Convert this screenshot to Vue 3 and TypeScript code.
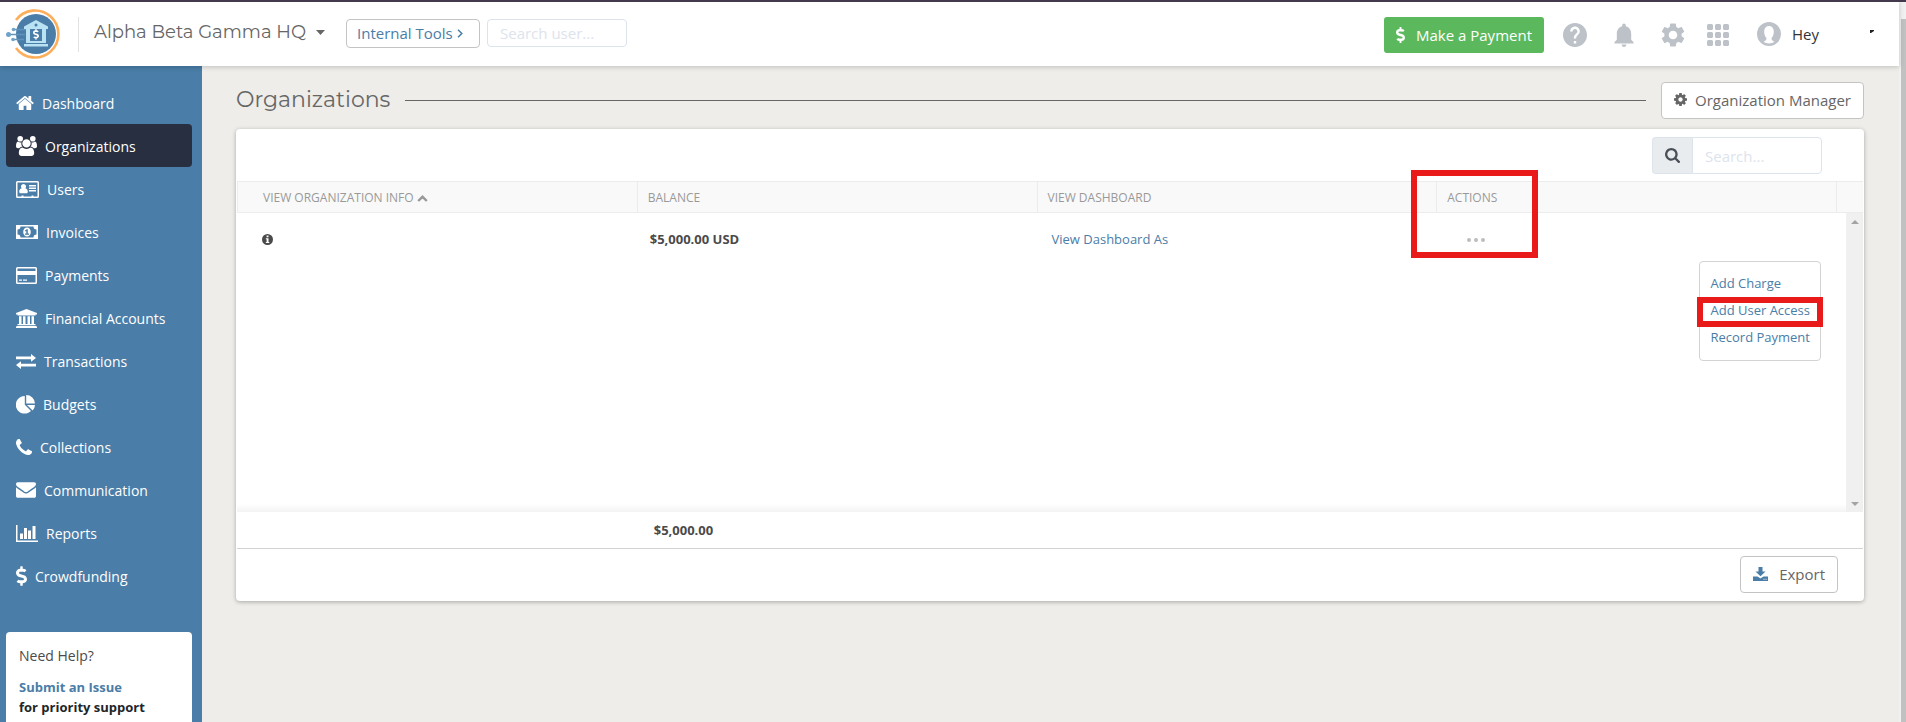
<script setup lang="ts">
import { ref } from 'vue'

interface Icon {
  box: string
  w: number
  h: number
  d: string
}
interface NavItem {
  label: string
  icon: Icon
  active?: boolean
}

const dollarPath =
  'M209.2 233.4l-108-31.6C88.7 198.2 80 186.5 80 173.5c0-16.3 13.2-29.5 29.5-29.5h66.3c12.2 0 24.2 3.7 34.2 10.5 6.1 4.1 14.3 3.1 19.5-2l34.8-34c7.1-6.9 6.1-18.4-1.8-24.5C238 74.8 207.4 64.1 176 64V16c0-8.8-7.2-16-16-16h-32c-8.8 0-16 7.2-16 16v48h-2.5C45.8 64-5.4 118.7.5 183.6c4.2 46.1 39.4 83.6 83.8 96.6l102.5 30c12.5 3.7 21.2 15.3 21.2 28.3 0 16.3-13.2 29.5-29.5 29.5h-66.3C100 368 88 364.3 78 357.5c-6.1-4.1-14.3-3.1-19.5 2l-34.8 34c-7.1 6.9-6.1 18.4 1.8 24.5 24.5 19.2 55.1 29.9 86.5 30v48c0 8.8 7.2 16 16 16h32c8.8 0 16-7.2 16-16v-48.2c46.6-.9 90.3-28.6 105.7-72.7 21.5-61.6-14.6-124.8-72.5-141.7z'

const navItems: NavItem[] = [
  {
    label: 'Dashboard',
    icon: {
      box: '64 253 1664 1283', w: 18, h: 14,
      d: 'M1472 992v480q0 26-19 45t-45 19h-384v-384h-256v384h-384q-26 0-45-19t-19-45v-480q0-1 .5-3t.5-3l575-474 575 474q1 2 1 6zm223-69l-62 74q-8 9-21 11h-3q-13 0-21-7l-692-577-692 577q-12 8-24 7-13-2-21-11l-62-74q-8-10-7-23.5t11-21.5l719-599q32-26 76-26t76 26l244 204v-195q0-14 9-23t23-9h192q14 0 23 9t9 23v408l219 182q10 8 11 21.5t-7 23.5z',
    },
  },
  {
    label: 'Organizations',
    active: true,
    icon: {
      box: '0 0 21 20', w: 21, h: 20,
      d: 'M10.500 3.200a4.200 4.200 0 1 1 0 8.400a4.200 4.200 0 1 1 0-8.400zM4.200 0a2.800 2.800 0 1 1 0 5.600a2.800 2.800 0 1 1 0-5.600zM16.800 0a2.800 2.800 0 1 1 0 5.600a2.800 2.800 0 1 1 0-5.600zM5.500 6.200C5 8.200 5.600 9.800 6.600 10.800C5 10.800 4 11.400 3.400 12.200H2C.8 12.200 0 11.400 0 10.200C0 7.600.6 5.800 2 5.500C3.200 6.400 4.500 6.600 5.500 6.200zM15.500 6.200C16 8.200 15.400 9.800 14.400 10.800C16 10.800 17 11.400 17.600 12.200H19C20.200 12.200 21 11.400 21 10.200C21 7.600 20.400 5.800 19 5.500C17.800 6.400 16.500 6.600 15.500 6.200zM6.400 11.500C8.800 13.400 12.200 13.400 14.600 11.500C17 11.600 18.200 14 18.200 17C18.200 19 17 20 15.300 20H5.700C4 20 2.800 19 2.800 17C2.800 14 4 11.600 6.400 11.500z',
    },
  },
  {
    label: 'Users',
    icon: {
      box: '0 0 23 17', w: 23, h: 17,
      d: 'M1.500 0h20a1.500 1.500 0 0 1 1.500 1.500v14a1.500 1.500 0 0 1-1.500 1.500h-20a1.500 1.500 0 0 1-1.500-1.500v-14a1.500 1.500 0 0 1 1.500-1.500zM1.500 1.500v14h4v-1h2v1h8v-1h2v1h4v-14zM7.500 3a2.500 2.500 0 0 1 1.800 4.300c1.700.2 2.500 1.700 2.500 3.500c0 .8-.5 1.500-1.300 1.500h-6c-.8 0-1.300-.7-1.300-1.500c0-1.800.8-3.300 2.500-3.500a2.500 2.500 0 0 1 1.800-4.300zM13 4h7v1.500h-7zM13 6.500h7v1.500h-7zM13 9h7v1.500h-7z',
    },
  },
  {
    label: 'Invoices',
    icon: {
      box: '0 0 22 14', w: 22, h: 14,
      d: 'M0 0h22v14H0zM4.500 1.500a3 3 0 0 1-3 3v5a3 3 0 0 1 3 3h13a3 3 0 0 1 3-3v-5a3 3 0 0 1-3-3zM11 2.500c2.200 0 3.800 2 3.800 4.500s-1.600 4.500-3.800 4.500s-3.800-2-3.800-4.500s1.600-4.500 3.800-4.500zM10.600 4.200L8.800 5.700l.7.900l.8-.5v2.500H9v1.200h4V8.600h-1.200V4.200z',
    },
  },
  {
    label: 'Payments',
    icon: {
      box: '0 0 21 17', w: 21, h: 17,
      d: 'M1.500 0h18a1.500 1.500 0 0 1 1.500 1.500v14a1.500 1.500 0 0 1-1.500 1.500h-18a1.500 1.500 0 0 1-1.500-1.500v-14a1.500 1.500 0 0 1 1.500-1.500zM1.500 1.500v2.500h18v-2.500zM1.500 8v7.500h18v-7.500zM3 12.500h3v1.200h-3zM7 12.500h4v1.200h-4z',
    },
  },
  {
    label: 'Financial Accounts',
    icon: {
      box: '0 0 21 19', w: 21, h: 19,
      d: 'M10.500 0L21 4v1.500h-1.500v1h-18v-1H0V4zM3 7.300h2.500v7.700h1.500v-7.700h2.500v7.700h2v-7.700h2.500v7.700h1.500v-7.700h2.500v7.700h1.500v1.300h-18V15H3zM1 17h19l1 .8V19H0v-1.200z',
    },
  },
  {
    label: 'Transactions',
    icon: {
      box: '0 0 20 15', w: 20, h: 15,
      d: 'M0 2.500h15V0l5 3.900l-5 3.900V5.300H0zM20 9.800H5V7.200L0 11.100L5 15v-2.500h15z',
    },
  },
  {
    label: 'Budgets',
    icon: {
      box: '0 0 19 19', w: 19, h: 19,
      d: 'M8.800 1v8.700l6.200 6.200A8.800 8.800 0 1 1 8.800 1zM10.200 0A8.800 8.800 0 0 1 19 8.500h-8.800zM11 10h8a8.800 8.800 0 0 1-2.400 5.600z',
    },
  },
  {
    label: 'Collections',
    icon: {
      box: '192 128 1408 1408', w: 16, h: 16,
      d: 'M1600 1240q0 27-10 70.5t-21 68.5q-21 50-122 106-94 51-186 51-27 0-53-3.5t-57.5-12.5-47-14.500-55.500-20.500-49-18q-98-35-175-83-127-79-264-216t-216-264q-48-77-83-175-3-9-18-49t-20.500-55.500-14.500-47-12.500-57.500-3.500-53q0-92 51-186 56-101 106-122 25-11 68.500-21t70.500-10q14 0 21 3 18 6 53 76 11 19 30 54t35 63.500 31 53.500q3 4 17.500 25t21.500 35.500 7 28.500q0 20-28.500 50t-62 55-62 53-28.500 46q0 9 5 22.500t8.500 20.500 14 24 11.500 19q76 137 174 235t235 174q2 1 19 11.500t24 14 20.500 8.500 22.500 5q18 0 46-28.500t53-62 55-62 50-28.500q14 0 28.500 7t35.500 21.500 25 17.500q25 15 53.500 31t63.500 35 54 30q70 35 76 53 3 7 3 21z',
    },
  },
  {
    label: 'Communication',
    icon: {
      box: '0 256 1792 1408', w: 20, h: 16,
      d: 'M1792 710v794q0 66-47 113t-113 47h-1472q-66 0-113-47t-47-113v-794q44 49 101 87 362 246 497 345 57 42 92.500 65.500t94.500 48 110 24.500h2q51 0 110-24.500t94.500-48 92.500-65.500q170-123 498-345 57-39 100-87zm0-294q0 79-49 151t-122 123q-376 261-468 325-10 7-42.500 31t-54 38.500-52 32.500-57.500 27-50 9h-2q-23 0-50-9t-57.500-27-52-32.500-54-38.500-42.500-31q-91-64-262-182.500t-205-142.500q-62-42-117-115.500t-55-136.500q0-78 41.500-130t118.500-52h1472q65 0 112.500 47t47.500 113z',
    },
  },
  {
    label: 'Reports',
    icon: {
      box: '0 0 22 17', w: 22, h: 17,
      d: 'M0 0h1.500v15.500H22V17H0zM4 8.500h3V14H4zM8 3h3v11H8zM12 5.500h3V14h-3zM16.500 1h3v13h-3z',
    },
  },
  { label: 'Crowdfunding', icon: { box: '0 0 288 512', w: 11, h: 20, d: dollarPath } },
]

const tools: { label: string; cls: string; box: string; d: string }[] = [
  {
    label: 'Help', cls: 'help', box: '2 2 20 20',
    d: 'M12 2C6.480 2 2 6.480 2 12s4.480 10 10 10 10-4.480 10-10S17.520 2 12 2zm1 17h-2v-2h2v2zm2.070-7.750l-.9.920C13.450 12.900 13 13.500 13 15h-2v-.5c0-1.100.45-2.100 1.170-2.830l1.240-1.260c.37-.36.59-.86.59-1.410 0-1.100-.9-2-2-2s-2 .9-2 2H8c0-2.210 1.790-4 4-4s4 1.790 4 4c0 .88-.36 1.680-.93 2.250z',
  },
  {
    label: 'Notifications', cls: 'bell', box: '2 2 20 20',
    d: 'M12 22c1.100 0 2-.9 2-2h-4c0 1.100.89 2 2 2zm6-6v-5c0-3.070-1.640-5.640-4.500-6.320V4c0-.83-.67-1.500-1.500-1.500s-1.500.67-1.500 1.500v.68C7.630 5.360 6 7.920 6 11v5l-2 2v1h16v-1l-2-2z',
  },
  {
    label: 'Settings', cls: 'gear', box: '2 2 20 20',
    d: 'M19.140 12.940c.04-.3.06-.61.06-.94 0-.32-.02-.64-.07-.94l2.030-1.580c.18-.14.23-.41.12-.61l-1.920-3.320c-.12-.22-.37-.29-.59-.22l-2.390.96c-.5-.38-1.030-.7-1.620-.94l-.36-2.540c-.04-.24-.24-.41-.48-.41h-3.840c-.24 0-.43.17-.47.41l-.36 2.540c-.59.24-1.130.57-1.620.94l-2.390-.96c-.22-.08-.47 0-.59.22L2.740 8.870c-.12.21-.08.47.12.61l2.030 1.580c-.05.3-.09.63-.09.94s.02.64.07.94l-2.030 1.580c-.18.14-.23.41-.12.61l1.920 3.320c.12.22.37.29.59.22l2.390-.96c.5.38 1.030.7 1.620.94l.36 2.540c.05.24.24.41.48.41h3.840c.24 0 .44-.17.47-.41l.36-2.540c.59-.24 1.130-.56 1.620-.94l2.390.96c.22.08.47 0 .59-.22l1.920-3.320c.12-.22.07-.47-.12-.61l-2.010-1.580zM12 15.600c-1.980 0-3.600-1.620-3.600-3.600s1.620-3.600 3.600-3.600 3.600 1.620 3.600 3.600-1.620 3.600-3.600 3.600z',
  },
  {
    label: 'Apps', cls: 'grid', box: '1 1 22 22',
    d: 'M2.500 1h3a1.500 1.500 0 0 1 1.500 1.500v3a1.500 1.500 0 0 1-1.500 1.500h-3a1.500 1.500 0 0 1-1.500-1.500v-3a1.500 1.500 0 0 1 1.500-1.500zm8 0h3a1.500 1.500 0 0 1 1.500 1.500v3a1.500 1.500 0 0 1-1.500 1.500h-3a1.500 1.500 0 0 1-1.500-1.500v-3a1.500 1.500 0 0 1 1.500-1.500zm8 0h3a1.500 1.500 0 0 1 1.500 1.500v3a1.500 1.500 0 0 1-1.500 1.500h-3a1.500 1.500 0 0 1-1.500-1.500v-3a1.500 1.500 0 0 1 1.500-1.500zm-16 8h3a1.500 1.500 0 0 1 1.500 1.500v3a1.500 1.500 0 0 1-1.500 1.500h-3a1.500 1.500 0 0 1-1.500-1.500v-3a1.500 1.500 0 0 1 1.500-1.500zm8 0h3a1.500 1.500 0 0 1 1.500 1.500v3a1.500 1.500 0 0 1-1.500 1.500h-3a1.500 1.500 0 0 1-1.500-1.500v-3a1.500 1.500 0 0 1 1.500-1.500zm8 0h3a1.500 1.500 0 0 1 1.500 1.500v3a1.500 1.500 0 0 1-1.500 1.500h-3a1.500 1.500 0 0 1-1.500-1.500v-3a1.500 1.500 0 0 1 1.500-1.500zm-16 8h3a1.500 1.500 0 0 1 1.500 1.500v3a1.500 1.500 0 0 1-1.500 1.500h-3a1.500 1.500 0 0 1-1.500-1.500v-3a1.500 1.500 0 0 1 1.500-1.500zm8 0h3a1.500 1.500 0 0 1 1.500 1.500v3a1.500 1.500 0 0 1-1.500 1.500h-3a1.500 1.500 0 0 1-1.500-1.500v-3a1.500 1.500 0 0 1 1.500-1.500zm8 0h3a1.500 1.500 0 0 1 1.500 1.500v3a1.500 1.500 0 0 1-1.500 1.500h-3a1.500 1.500 0 0 1-1.500-1.500v-3a1.500 1.500 0 0 1 1.500-1.500z',
  },
]

const menuOpen = ref(true)
const userQuery = ref('')
const query = ref('')
</script>

<template>
  <div class="page">
    <div class="shell">
      <header class="topbar">
        <a class="logo" href="#" aria-label="Home">
          <svg width="55" height="50" viewBox="0 0 55 50">
            <path d="M10 11A23.500 23.500 0 1 1 10 39" fill="none" stroke="#fdae5b" stroke-width="2.600" />
            <circle cx="30" cy="25" r="20" fill="#4a7da7" />
            <g stroke="#5f93bb" stroke-width="1.500" fill="#4a7da7">
              <path d="M7 20.500H20M2 25.500H19M6 30.500H18" />
            </g>
            <g fill="#6fa3c8">
              <circle cx="2.500" cy="25.500" r="2.500" />
              <circle cx="7.500" cy="20.500" r="1.800" />
              <circle cx="7" cy="30.500" r="1.800" />
            </g>
            <g fill="#b9e2f2">
              <path d="M30 11L42 17.500V20H18V17.500z" />
              <path d="M20 20h4v12h-4zM36 20h4v12h-4zM20 32h20v2H20zM18 35h24v2.500H18z" />
            </g>
            <circle cx="30" cy="16" r="1.500" fill="#4a7da7" />
            <g transform="translate(27 20) scale(.0208)" fill="#fff"><path :d="dollarPath" /></g>
          </svg>
        </a>
        <button class="org-switch" type="button">
          Alpha Beta Gamma HQ
          <svg width="9" height="5" viewBox="0 0 9 5"><path d="M0 0h9L4.500 5z" fill="currentColor" /></svg>
        </button>
        <button class="internal" type="button">
          Internal Tools
          <svg width="6" height="9" viewBox="0 0 6 9"><path d="M1 .8L4.800 4.500L1 8.200" fill="none" stroke="currentColor" stroke-width="1.500" /></svg>
        </button>
        <input v-model="userQuery" class="user-search" type="text" placeholder="Search user..." aria-label="Search user" />
        <button class="pay" type="button">
          <svg width="9" height="16" viewBox="0 0 288 512"><path :d="dollarPath" fill="currentColor" /></svg>
          Make a Payment
        </button>
        <nav class="tools" aria-label="Tools">
          <button v-for="t in tools" :key="t.label" type="button" :class="['tool', t.cls]" :aria-label="t.label">
            <svg width="24" height="24" :viewBox="t.box"><path :d="t.d" fill="currentColor" /></svg>
          </button>
        </nav>
        <button class="account" type="button">
          <svg width="24" height="24" viewBox="0 0 24 24">
            <circle cx="12" cy="12" r="12" fill="#bdc2c9" />
            <path d="M12 4C8.800 4 7.200 6.500 7.200 9.800C7.200 13 8.300 14.700 9.500 16C9.700 17.800 8.500 19 6.600 19.800C9.500 22 14.500 22 17.400 19.800C15.500 19 14.300 17.800 14.500 16C15.700 14.700 16.800 13 16.800 9.800C16.800 6.500 15.200 4 12 4z" fill="#fff" />
          </svg>
          <span>Hey</span>
          <svg class="tick" width="4" height="3" viewBox="0 0 4 3"><path d="M0 0h4v1L1 3H0z" fill="#222" /></svg>
        </button>
      </header>

      <div class="columns">
        <aside class="sidebar">
          <nav aria-label="Main">
            <a v-for="n in navItems" :key="n.label" href="#" :class="['nav-item', { active: n.active }]">
              <svg :width="n.icon.w" :height="n.icon.h" :viewBox="n.icon.box">
                <path :d="n.icon.d" fill="currentColor" fill-rule="evenodd" />
              </svg>
              {{ n.label }}
            </a>
          </nav>
          <section class="help-card">
            <h2>Need Help?</h2>
            <p><a href="#">Submit an Issue</a><br />for priority support<br />or <a href="#">email us</a></p>
          </section>
        </aside>

        <main class="main">
          <div class="heading">
            <h1>Organizations</h1>
            <span class="rule"></span>
            <button class="outline" type="button">
              <svg width="13" height="13" viewBox="128 128 1536 1536"><path d="M1152 896q0-106-75-181t-181-75-181 75-75 181 75 181 181 75 181-75 75-181zm512-109v222q0 12-8 23t-20 13l-185 28q-19 54-39 91 35 50 107 138 10 12 10 25t-9 23q-27 37-99 108t-94 71q-12 0-26-9l-138-108q-44 23-91 38-16 136-29 186-7 28-36 28h-222q-14 0-24.500-8.500t-11.500-21.500l-28-184q-49-16-90-37l-141 107q-10 9-25 9-14 0-25-11-126-114-165-168-7-10-7-23 0-12 8-23 15-21 51-66.500t54-70.500q-27-50-41-99l-183-27q-13-2-21-12.500t-8-23.500v-222q0-12 8-23t19-13l186-28q14-46 39-92-40-57-107-138-10-12-10-24 0-10 9-23 26-36 98.500-107.500t94.500-71.500q13 0 26 10l138 107q44-23 91-38 16-136 29-186 7-28 36-28h222q14 0 24.500 8.500t11.500 21.500l28 184q49 16 90 37l142-107q9-9 24-9 13 0 25 10 129 119 165 170 7 8 7 22 0 12-8 23-15 21-51 66.500t-54 70.500q26 50 41 98l183 28q13 2 21 12.500t8 23.500z" fill="currentColor" /></svg>
              Organization Manager
            </button>
          </div>

          <section class="card">
            <div class="card-top">
              <label class="search">
                <span class="addon">
                  <svg width="15" height="15" viewBox="64 128 1664 1664"><path d="M1216 832q0-185-131.500-316.500t-316.500-131.500-316.500 131.500-131.500 316.500 131.500 316.500 316.500 131.500 316.500-131.500 131.500-316.500zm512 832q0 52-38 90t-90 38q-54 0-90-38l-343-342q-179 124-399 124-143 0-273.500-55.500t-225-150-150-225-55.500-273.500 55.500-273.500 150-225 225-150 273.500-55.500 273.500 55.500 225 150 150 225 55.500 273.500q0 220-124 399l343 343q37 37 37 90z" fill="currentColor" /></svg>
                </span>
                <input v-model="query" type="text" placeholder="Search..." aria-label="Search" />
              </label>
            </div>

            <table>
              <thead>
                <tr>
                  <th class="first">
                    VIEW ORGANIZATION INFO
                    <svg width="11" height="7" viewBox="0 0 11 7"><path d="M1.200 6L5.500 1.800L9.800 6" fill="none" stroke="currentColor" stroke-width="2.400" /></svg>
                  </th>
                  <th>BALANCE</th>
                  <th>VIEW DASHBOARD</th>
                  <th class="actions">ACTIONS<span class="mark mark-actions"></span></th>
                  <th class="gutter"></th>
                </tr>
              </thead>
              <tbody>
                <tr>
                  <td class="first">
                    <button class="plain info" type="button" aria-label="Organization info">
                      <svg width="11" height="11" viewBox="0 0 11 11"><path d="M5.500 0a5.500 5.500 0 1 1 0 11a5.500 5.500 0 1 1 0-11zM4.600 1.600v1.600h1.900V1.600zM3.800 4.200v1h.8v2.800h-.8v1.100h3.500V8h-.8V4.200z" fill="currentColor" fill-rule="evenodd" /></svg>
                    </button>
                  </td>
                  <td class="money">$5,000.00 USD</td>
                  <td class="dash"><a href="#">View Dashboard As</a></td>
                  <td class="more">
                    <button class="plain" type="button" aria-label="Actions" @click="menuOpen = !menuOpen">
                      <svg width="18" height="4" viewBox="0 0 18 4" fill="#bdbdbd"><circle cx="2" cy="2" r="2" /><circle cx="9" cy="2" r="2" /><circle cx="16" cy="2" r="2" /></svg>
                    </button>
                  </td>
                  <td class="gutter">
                    <div class="track">
                      <svg width="8" height="4" viewBox="0 0 8 4"><path d="M0 4h8L4 0z" fill="#a3a3a3" /></svg>
                      <svg width="8" height="4" viewBox="0 0 8 4"><path d="M0 0h8L4 4z" fill="#a3a3a3" /></svg>
                    </div>
                  </td>
                </tr>
              </tbody>
              <tfoot>
                <tr>
                  <td></td>
                  <td class="total">$5,000.00</td>
                  <td></td>
                  <td></td>
                  <td></td>
                </tr>
              </tfoot>
            </table>

            <div class="card-bottom">
              <button class="outline export" type="button">
                <svg width="15" height="14" viewBox="0 0 15 14"><path d="M5.500 0h4v4.500H12.500L7.500 9.200L2.500 4.500H5.500zM0 9.500h4.500l3 2l3-2H15V14H0zM10.500 11.800v1h1v-1zM12.600 11.800v1h1v-1z" fill="#4a7da7" fill-rule="evenodd" /></svg>
                Export
              </button>
            </div>

            <div v-if="menuOpen" class="menu">
              <a href="#">Add Charge</a>
              <a href="#" class="marked">Add User Access<span class="mark mark-item"></span></a>
              <a href="#">Record Payment</a>
            </div>
          </section>
        </main>
      </div>
    </div>
    <div class="page-scroll"><div class="thumb"></div></div>
  </div>
</template>

<style>
body {
  background: #eeede9;
}
</style>

<style scoped>
* {
  box-sizing: border-box;
}
.page {
  display: flex;
  height: 100vh;
  overflow: hidden;
  border-top: 2px solid #43384c;
  background: #eeede9;
  color: #4a4a4a;
  font-family: 'Open Sans', 'Noto Sans', sans-serif;
  font-size: 13px;
}
button {
  font: inherit;
  color: inherit;
  cursor: pointer;
}
a {
  color: #4a7da7;
  text-decoration: none;
}
svg {
  flex: none;
  display: block;
}
.shell {
  flex: 1;
  min-width: 0;
  display: flex;
  flex-direction: column;
}
.page-scroll {
  width: 7px;
  padding: 17px 0 0 2px;
  background: #f1f1f1;
}
.thumb {
  height: 100%;
  background: #c1c1c1;
}

.topbar {
  position: relative;
  display: flex;
  align-items: center;
  height: 64px;
  padding: 0 25px 0 6px;
  background: #fff;
  box-shadow: 0 1px 5px rgba(0, 0, 0, 0.2);
}
.logo {
  padding-right: 17px;
}
.org-switch {
  display: flex;
  align-items: center;
  gap: 10px;
  height: 35px;
  padding: 0 0 4px 15px;
  border: 0;
  border-left: 1px solid #e3e3e3;
  background: none;
  font-family: Montserrat, Inter, sans-serif;
  font-size: 18px;
  color: #666;
}
.internal {
  display: flex;
  align-items: center;
  gap: 4px;
  width: 134px;
  height: 29px;
  margin: 0 0 2px 21px;
  padding: 0 10px;
  border: 1px solid #c4c4c4;
  border-radius: 4px;
  background: #fff;
  color: #4a7da7;
  font-size: 15px;
}
.user-search {
  width: 140px;
  height: 28px;
  margin: 0 0 2px 7px;
  padding: 0 12px;
}
input {
  border: 1px solid #dde3ec;
  border-radius: 4px;
  background: #fff;
  font: inherit;
  font-size: 15px;
  color: #4a4a4a;
}
input::placeholder {
  color: #dde3ec;
  opacity: 1;
}
.pay {
  display: flex;
  align-items: center;
  gap: 11px;
  height: 36px;
  margin: 2px 0 0 auto;
  padding: 0 12px;
  border: 0;
  border-radius: 3px;
  background: #5cb85c;
  color: #fff;
  font-size: 15px;
}
.tools {
  display: flex;
  gap: 25px;
  margin: 2px 28px 0 19px;
}
.tool {
  padding: 0;
  border: 0;
  background: none;
  color: #bdc2c9;
}
.tool.grid {
  margin-left: -3px;
}
.tool.grid svg {
  width: 22px;
}
.account {
  display: flex;
  align-items: center;
  width: 117px;
  padding: 0;
  border: 0;
  background: none;
  font-size: 15px;
  color: #333;
}
.account span {
  margin-left: 11px;
}
.tick {
  margin: 0 0 5px auto;
}

.columns {
  flex: 1;
  min-height: 0;
  display: flex;
}
.sidebar {
  width: 202px;
  padding: 15px 10px 0 6px;
  background: #4a7da7;
  overflow: hidden;
}
.nav-item {
  display: flex;
  align-items: center;
  gap: 8px;
  height: 43px;
  padding: 1px 0 0 10px;
  border-radius: 4px;
  color: #fff;
  font-size: 14px;
}
.nav-item.active {
  background: #272f40;
}
.help-card {
  height: 160px;
  margin-top: 35px;
  padding: 14px 13px;
  border-radius: 4px;
  background: #fff;
  color: #212529;
}
.help-card h2 {
  margin: 0 0 11px;
  font-size: 14px;
  line-height: 20px;
  font-weight: 400;
  color: #4a4a4a;
}
.help-card p {
  margin: 0;
  font-weight: 700;
  line-height: 20px;
}

.main {
  flex: 1;
  min-width: 0;
  padding: 16px 35px 0 34px;
}
.heading {
  display: flex;
  align-items: center;
  height: 37px;
  margin-bottom: 10px;
}
h1 {
  margin: 0;
  padding-bottom: 2px;
  font-family: Montserrat, Inter, sans-serif;
  font-size: 22px;
  font-weight: 400;
  color: #666;
}
.rule {
  flex: 1;
  height: 1px;
  margin: 0 15px;
  background: #666;
}
.outline {
  display: flex;
  align-items: center;
  gap: 8px;
  height: 37px;
  padding: 0 12px 2px;
  border: 1px solid #c4c4c4;
  border-radius: 4px;
  background: #fff;
  color: #666;
  font-size: 15px;
}
.card {
  position: relative;
  padding: 0 1px;
  border-radius: 4px;
  background: #fff;
  box-shadow: 0 1px 4px rgba(0, 0, 0, 0.3);
}
.card-top {
  display: flex;
  justify-content: flex-end;
  height: 52px;
  padding: 8px 41px 0 0;
}
.search {
  display: flex;
  width: 170px;
  height: 37px;
}
.addon {
  flex: none;
  display: grid;
  place-items: center;
  width: 40px;
  border: 1px solid #dde3ec;
  border-right: 0;
  border-radius: 4px 0 0 4px;
  background: #e9ecef;
  color: #495057;
}
.search input {
  flex: 1;
  min-width: 0;
  padding: 0 12px;
  border-radius: 0 4px 4px 0;
}

table {
  width: 100%;
  table-layout: fixed;
  border-collapse: separate;
  border-spacing: 0;
}
th {
  height: 32px;
  padding: 2px 0 0 10px;
  border: solid #ececec;
  border-width: 1px 0 1px 1px;
  background: #f9f9f9;
  font-size: 12px;
  line-height: 18px;
  font-weight: 400;
  text-align: left;
  color: #999;
}
th.first {
  padding-left: 25px;
}
th.first svg {
  display: inline-block;
}
th.actions {
  position: relative;
}
.gutter {
  width: 27px;
}
td {
  padding: 0;
}
tbody td {
  height: 299px;
  padding-top: 16px;
  line-height: 20px;
  vertical-align: top;
  background: linear-gradient(to top, #f3f3f3, #fff 8px);
}
tbody td.first {
  padding-left: 25px;
}
.plain {
  display: flex;
  align-items: center;
  height: 20px;
  padding: 0;
  border: 0;
  background: none;
}
tbody td.money {
  padding-left: 13px;
  font-weight: 700;
}
tbody td.dash {
  padding-left: 15px;
}
tbody td.more {
  padding: 17px 0 0 31px;
}
tbody td.gutter {
  padding: 0 0 0 10px;
}
.track {
  display: flex;
  flex-direction: column;
  align-items: center;
  justify-content: space-between;
  height: 299px;
  padding: 7px 0 6px;
  background: #f0f0f0;
}
tfoot td {
  height: 37px;
  border-bottom: 1px solid #d3d3d3;
}
tfoot td.total {
  padding-left: 17px;
  font-weight: 700;
}
.card-bottom {
  display: flex;
  justify-content: flex-end;
  padding: 7px 25px 8px;
}
.export {
  gap: 11px;
}

.menu {
  position: absolute;
  top: 132px;
  right: 43px;
  padding: 8px 10px 9px;
  border: 1px solid #d3d3d3;
  border-radius: 4px;
  background: #fff;
}
.menu a {
  display: block;
  line-height: 27px;
}
.marked {
  position: relative;
}
.mark {
  position: absolute;
  border: 6px solid #e81a1a;
  pointer-events: none;
}
.mark-actions {
  top: -12px;
  left: -26px;
  width: 127px;
  height: 88px;
}
.mark-item {
  top: 0;
  left: -13px;
  right: -13px;
  height: 30px;
}
</style>
